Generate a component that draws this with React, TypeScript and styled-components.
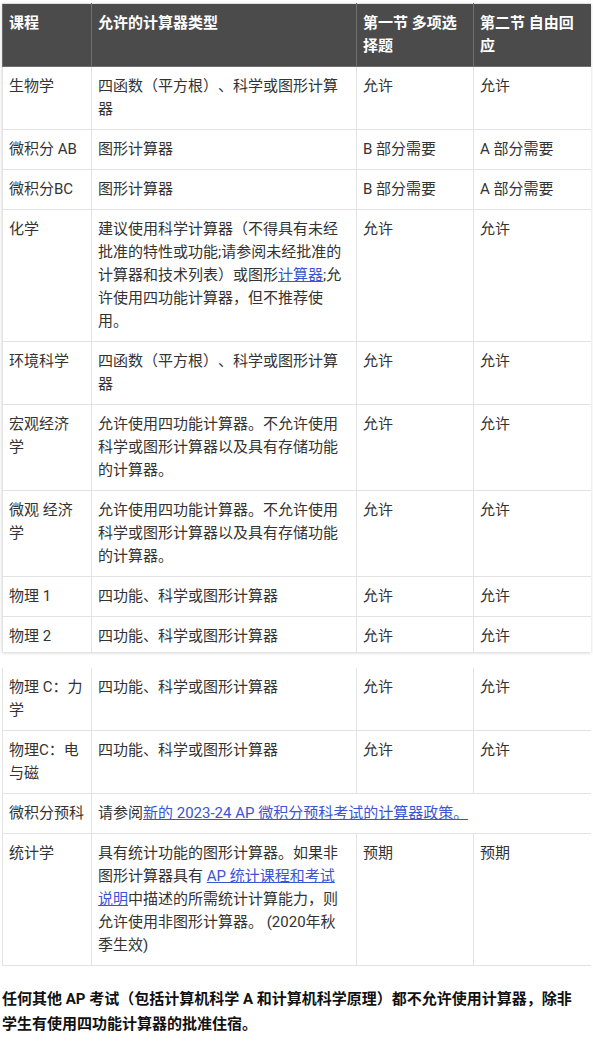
import React from "react";
import styled, { createGlobalStyle } from "styled-components";

const GlobalStyle = createGlobalStyle`
  html, body {
    margin: 0;
    padding: 0;
    background: #ffffff;
  }
  body {
    font-family: Roboto, "Noto Sans CJK SC", "Noto Sans", sans-serif;
    color: #333333;
    text-spacing-trim: space-all;
  }
`;

const Page = styled.div`
  padding: 3px 2px 40px 2px;
  display: flex;
  flex-direction: column;
`;

const ClipBox = styled.div<{ $maxHeight?: number; $shadow?: boolean }>`
  overflow: hidden;
  max-height: ${(p) => (p.$maxHeight ? `${p.$maxHeight}px` : "none")};
  box-shadow: ${(p) => (p.$shadow ? "0 1px 3px rgba(0,0,0,0.18)" : "none")};
  margin-top: ${(p) => (p.$shadow ? "0" : "16px")};
`;

const Table = styled.table<{ $continued?: boolean }>`
  width: 100%;
  border-collapse: collapse;
  table-layout: fixed;
  font-size: 15px;
  line-height: 23px;
  text-spacing-trim: space-all;

  ${(p) =>
    p.$continued &&
    `
    tbody tr:first-child td { border-top: none; }
  `}
`;

const HeadCell = styled.th`
  background: #4b4b4b;
  color: #ffffff;
  font-weight: 700;
  text-align: left;
  vertical-align: top;
  padding: 8px 7.5px 8px 6px;
  border: 1px solid #6f6f6f;
  border-top-color: #e0e0e0;
`;

const Cell = styled.td<{ $nowrap?: boolean }>`
  vertical-align: top;
  padding: 8px 7.5px 8px 6px;
  border: 1px solid #e3e3e3;
  color: #333333;
  white-space: ${(p) => (p.$nowrap ? "nowrap" : "normal")};
`;

const Link = styled.a`
  color: #3a55d4;
  text-decoration: underline;
`;

const Footer = styled.p`
  margin: 21px 0 0 0;
  font-size: 15px;
  line-height: 25px;
  font-weight: 700;
  color: #111111;
  padding-right: 18px;
  text-spacing-trim: space-all;
`;

const Cols = () => (
  <colgroup>
    <col style={{ width: 89 }} />
    <col style={{ width: 265 }} />
    <col style={{ width: 117 }} />
    <col style={{ width: 118 }} />
  </colgroup>
);

type Row = { course: string; types: React.ReactNode; s1: string; s2: string };

const rowsA: Row[] = [
  { course: "生物学", types: "四函数（平方根）、科学或图形计算器", s1: "允许", s2: "允许" },
  { course: "微积分 AB", types: "图形计算器", s1: "B 部分需要", s2: "A 部分需要" },
  { course: "微积分BC", types: "图形计算器", s1: "B 部分需要", s2: "A 部分需要" },
  {
    course: "化学",
    types: (
      <>
        建议使用科学计算器（不得具有未经批准的特性或功能;请参阅未经批准的计算器和技术列表）或图形
        <Link href="#">计算器</Link>;允许使用四功能计算器，但不推荐使用。
      </>
    ),
    s1: "允许",
    s2: "允许",
  },
  { course: "环境科学", types: "四函数（平方根）、科学或图形计算器", s1: "允许", s2: "允许" },
  {
    course: "宏观经济学",
    types: "允许使用四功能计算器。不允许使用科学或图形计算器以及具有存储功能的计算器。",
    s1: "允许",
    s2: "允许",
  },
  {
    course: "微观 经济学",
    types: "允许使用四功能计算器。不允许使用科学或图形计算器以及具有存储功能的计算器。",
    s1: "允许",
    s2: "允许",
  },
  { course: "物理 1", types: "四功能、科学或图形计算器", s1: "允许", s2: "允许" },
  { course: "物理 2", types: "四功能、科学或图形计算器", s1: "允许", s2: "允许" },
];

const rowsB: Row[] = [
  { course: "物理 C：力学", types: "四功能、科学或图形计算器", s1: "允许", s2: "允许" },
  { course: "物理C：电与磁", types: "四功能、科学或图形计算器", s1: "允许", s2: "允许" },
];

const BodyRow = ({ r }: { r: Row }) => (
  <tr>
    <Cell>{r.course}</Cell>
    <Cell>{r.types}</Cell>
    <Cell>{r.s1}</Cell>
    <Cell>{r.s2}</Cell>
  </tr>
);

export default function App() {
  return (
    <>
      <GlobalStyle />
      <Page>
        <ClipBox $maxHeight={649} $shadow>
          <Table>
            <Cols />
            <thead>
              <tr>
                <HeadCell>课程</HeadCell>
                <HeadCell>允许的计算器类型</HeadCell>
                <HeadCell>第一节 多项选择题</HeadCell>
                <HeadCell>第二节 自由回应</HeadCell>
              </tr>
            </thead>
            <tbody>
              {rowsA.map((r) => (
                <BodyRow key={r.course} r={r} />
              ))}
            </tbody>
          </Table>
        </ClipBox>
        <ClipBox>
          <Table $continued>
            <Cols />
            <tbody>
              {rowsB.map((r) => (
                <BodyRow key={r.course} r={r} />
              ))}
              <tr>
                <Cell $nowrap>微积分预科</Cell>
                <Cell colSpan={3}>
                  请参阅<Link href="#">新的 2023-24 AP 微积分预科考试的计算器政策。</Link>
                </Cell>
              </tr>
              <tr>
                <Cell>统计学</Cell>
                <Cell>
                  具有统计功能的图形计算器。如果非图形计算器具有{" "}
                  <Link href="#">AP 统计课程和考试说明</Link>中描述的所需统计计算能力，则允许使用非图形计算器。 (2020年秋季生效)
                </Cell>
                <Cell>预期</Cell>
                <Cell>预期</Cell>
              </tr>
            </tbody>
          </Table>
        </ClipBox>
        <Footer>
          任何其他 AP 考试（包括计算机科学 A 和计算机科学原理）都不允许使用计算器，除非学生有使用四功能计算器的批准住宿。
        </Footer>
      </Page>
    </>
  );
}
